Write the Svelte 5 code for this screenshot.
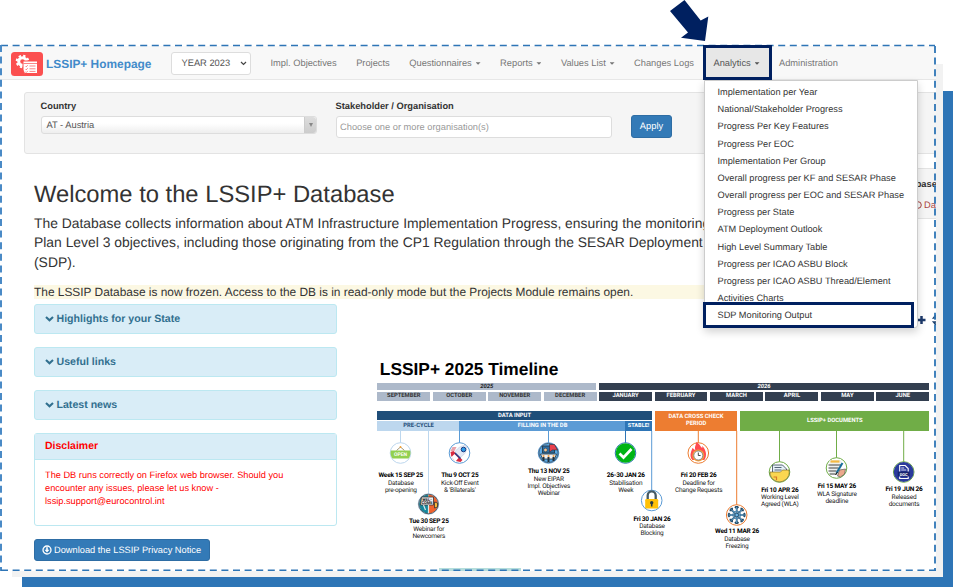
<script lang="ts">
  type Link = { label: string; caret?: boolean; active?: boolean };

  const links: Link[] = [
    { label: 'Impl. Objectives' },
    { label: 'Projects' },
    { label: 'Questionnaires', caret: true },
    { label: 'Reports', caret: true },
    { label: 'Values List', caret: true },
    { label: 'Changes Logs' },
    { label: 'Analytics', caret: true, active: true },
    { label: 'Administration' }
  ];

  const analytics = [
    'Implementation per Year',
    'National/Stakeholder Progress',
    'Progress Per Key Features',
    'Progress Per EOC',
    'Implementation Per Group',
    'Overall progress per KF and SESAR Phase',
    'Overall progress per EOC and SESAR Phase',
    'Progress per State',
    'ATM Deployment Outlook',
    'High Level Summary Table',
    'Progress per ICAO ASBU Block',
    'Progress per ICAO ASBU Thread/Element',
    'Activities Charts',
    'SDP Monitoring Output'
  ];

  const panels = ['Highlights for your State', 'Useful links', 'Latest news'];

  const months = [
    'SEPTEMBER', 'OCTOBER', 'NOVEMBER', 'DECEMBER', 'JANUARY',
    'FEBRUARY', 'MARCH', 'APRIL', 'MAY', 'JUNE'
  ];

  // x / y are the icon centre on the timeline canvas, label is the top of the caption
  const milestones = [
    { icon: 'open', x: 23.5, y: 70, from: 48, label: 89.5, color: '#bdd7ee', date: 'Week 15 SEP 25', lines: ['Database', 'pre-opening'] },
    { icon: 'welcome', x: 51.5, y: 121, from: 48, label: 135.5, color: '#bdd7ee', date: 'Tue 30 SEP 25', lines: ['Webinar for', 'Newcomers'] },
    { icon: 'rocket', x: 82.5, y: 70, from: 38, label: 89.5, color: '#5b9bd5', date: 'Thu 9 OCT 25', lines: ['Kick-Off Event', "& 'Bilaterals'"] },
    { icon: 'meeting', x: 171.5, y: 70, from: 48, label: 85.5, color: '#5b9bd5', date: 'Thu 13 NOV 25', lines: ['New EIPAR', 'Impl. Objectives', 'Webinar'] },
    { icon: 'check', x: 248.5, y: 70, from: 48, label: 89.5, color: '#2e75b6', date: '26-30 JAN 26', lines: ['Stabilisation', 'Week'] },
    { icon: 'lock', x: 274.7, y: 117.5, from: 48, label: 133, color: '#5b9bd5', date: 'Fri 30 JAN 26', lines: ['Database', 'Blocking'] },
    { icon: 'fire', x: 321.3, y: 70, from: 48, label: 89.5, color: '#ed7d31', date: 'Fri 20 FEB 26', lines: ['Deadline for', 'Change Requests'] },
    { icon: 'snow', x: 359.7, y: 132, from: 48, label: 145.5, color: '#ed7d31', date: 'Wed 11 MAR 26', lines: ['Database', 'Freezing'] },
    { icon: 'folder', x: 402.5, y: 89, from: 48, label: 104, color: '#70ad47', date: 'Fri 10 APR 26', lines: ['Working Level', 'Agreed (WLA)'] },
    { icon: 'sign', x: 459.5, y: 85, from: 48, label: 100.5, color: '#70ad47', date: 'Fri 15 MAY 26', lines: ['WLA Signature', 'deadline'] },
    { icon: 'doc', x: 526.7, y: 89, from: 48, label: 103.5, color: '#70ad47', date: 'Fri 19 JUN 26', lines: ['Released', 'documents'] }
  ];
</script>

<div class="slide">
  <div class="backdrop blue"></div>
  <div class="backdrop grey"></div>

  <div class="shot">
    <nav class="navbar">
      <svg class="logo" width="32" height="24" viewBox="0 0 32 24">
        <rect width="32" height="24" rx="3.5" fill="#fb4f4f" />
        <circle cx="11.5" cy="9.5" r="3.8" fill="none" stroke="#fff" stroke-width="3" />
        <circle cx="11.5" cy="9.5" r="5.8" fill="none" stroke="#fff" stroke-width="2" stroke-dasharray="2.4 2.15" />
        <path d="M12 9h14.500V21.500H13.500L12 18z" fill="#fff" stroke="#fb4f4f" stroke-width="1" />
        <path d="M12.500 11.500H26" stroke="#fb4f4f" stroke-width=".7" />
        <path d="M14.500 14l.8.8 1.400-1.600M14.500 17l.8.8 1.400-1.600M14.500 20l.8.5 1.400-1.400M18.500 14h6M18.500 16.800h6M18.500 19.400h6" fill="none" stroke="#fb4f4f" stroke-width=".7" />
      </svg>
      <span class="brand">LSSIP+ Homepage</span>
      <div class="year">
        YEAR 2023
        <svg width="7" height="5" viewBox="0 0 7 5"><path d="M1 1l2.500 2.500L6 1" fill="none" stroke="#444" stroke-width="1.200" /></svg>
      </div>
      <ul class="links">
        {#each links as link}
          <li class:active={link.active}>
            {link.label}{#if link.caret}<i class="caret"></i>{/if}
          </li>
        {/each}
      </ul>
    </nav>

    <section class="well">
      <div class="field country">
        <span class="lbl">Country</span>
        <div class="select">
          <span>AT - Austria</span>
          <b><i class="tri"></i></b>
        </div>
      </div>
      <div class="field stakeholder">
        <span class="lbl">Stakeholder / Organisation</span>
        <div class="input">Choose one or more organisation(s)</div>
      </div>
      <div class="apply">Apply</div>
    </section>

    <section class="intro">
      <h1>Welcome to the LSSIP+ Database</h1>
      <p>
        The Database collects information about ATM Infrastructure Implementation Progress, ensuring the monitoring<br />
        Plan Level 3 objectives, including those originating from the CP1 Regulation through the SESAR Deployment<br />
        (SDP).
      </p>
      <div class="frozen">The LSSIP Database is now frozen. Access to the DB is in read-only mode but the Projects Module remains open.</div>
    </section>

    <div class="columns">
      <aside>
        {#each panels as panel}
          <div class="panel">
            <svg width="9" height="6" viewBox="0 0 9 6"><path d="M1 1l3.500 3.300L8 1" fill="none" stroke="#31708f" stroke-width="2.100" /></svg>
            {panel}
          </div>
        {/each}
        <div class="disclaimer">
          <div class="disc-head">Disclaimer</div>
          <div class="disc-body">
            The DB runs correctly on Firefox web browser. Should you<br />
            encounter any issues, please let us know -<br />
            lssip.support@eurocontrol.int
          </div>
        </div>
        <div class="download">
          <svg width="10" height="10" viewBox="0 0 10 10">
            <circle cx="5" cy="5" r="4" fill="none" stroke="#fff" stroke-width="1.300" />
            <path d="M4.200 2.300h1.600v2.400h1.700L5 7.600 2.500 4.700h1.700z" fill="#fff" />
          </svg>
          Download the LSSIP Privacy Notice
        </div>
      </aside>

      <main>
        <h2>LSSIP+ 2025 Timeline</h2>
        <div class="timeline">
          <div class="years">
            <span class="y25">2025</span>
            <span class="y26">2026</span>
          </div>
          <div class="months">
            {#each months as month, i}
              <span class:dark={i > 3}>{month}</span>
            {/each}
          </div>
          <div class="phases">
            <div class="input-phase">
              <div class="bar navy">DATA INPUT</div>
              <div class="sub">
                <span class="pre">PRE-CYCLE</span>
                <span class="fill">FILLING IN THE DB</span>
                <span class="stable">STABLE!</span>
              </div>
            </div>
            <div class="bar orange">DATA CROSS CHECK<br />PERIOD</div>
            <div class="bar green">LSSIP+ DOCUMENTS</div>
          </div>

          <svg class="marks" width="554" height="160" viewBox="0 0 554 160">
            {#each milestones as m}
              <path d="M{m.x} {m.from}V{m.y - 10}" stroke={m.color} stroke-width="1" />
              <g transform="translate({m.x} {m.y})">
                <circle r="10.300" fill="#fff" stroke={m.color} stroke-width="1" />
                {#if m.icon === 'open'}
                  <path d="M-4-2.500L0-6l4 3.500" fill="none" stroke="#8a7a50" stroke-width=".8" />
                  <circle cy="-6" r=".9" fill="#f4a030" />
                  <path d="M-9.700-2.500H9.700A10 10 0 0 1 8 5.500H-8A10 10 0 0 1-9.700-2.500z" fill="#92d050" />
                  <text y="3.300" font-size="5" text-anchor="middle" fill="#fff">OPEN</text>
                {:else if m.icon === 'welcome'}
                  <path d="M0-9.500A9.500 9.500 0 0 0 0 9.500z" fill="#16879c" />
                  <path d="M0-9.500A9.500 9.500 0 0 1 0 9.500z" fill="#f0622d" />
                  <circle r="9.800" fill="none" stroke="#33414c" stroke-width=".8" />
                  <path d="M-7-7H5V1H-8z" fill="#eee" stroke="#333" stroke-width=".8" />
                  <text x="-1.500" y="-3.200" font-size="4" text-anchor="middle" fill="#222">WEL-</text>
                  <text x="-1.500" y=".4" font-size="4" text-anchor="middle" fill="#222">COME</text>
                  <path d="M-5 1L-3 6M0 1v8" stroke="#dfe8ea" stroke-width="1.200" />
                  <path d="M6-2l3 1v4l-3 1z" fill="#f6b93b" stroke="#333" stroke-width=".8" />
                {:else if m.icon === 'rocket'}
                  <path d="M7-7.500C1-8-3-4-5 0L-1 5C4 3 8-1 7-7.500z" fill="#e3e9f5" stroke="#b6c3db" stroke-width=".5" />
                  <path d="M-5-2l-4 0 2-4 4 0z" fill="#e9a3ab" />
                  <path d="M-9-1L-6-2 3 7 1 9A9.800 9.800 0 0 1-9-1z" fill="#d92b40" />
                  <path d="M-8 4L-5 1-1 5-4 8.500z" fill="#fff" />
                  <path d="M-4.500 0L1 5.500" stroke="#27418c" stroke-width="1.500" />
                  <circle cx="4" cy="-3.500" r="2.300" fill="#2c9be5" stroke="#1d3c83" stroke-width="1" />
                {:else if m.icon === 'meeting'}
                  <circle r="9.600" fill="#5baae6" stroke="#25445e" stroke-width=".8" />
                  <path d="M-6-7H6V0H-6z" fill="#2d6fa5" stroke="#24323e" stroke-width=".8" />
                  <path d="M1-8.500h5L9-3H4L1-1z" fill="#e9404d" stroke="#24323e" stroke-width=".6" />
                  <circle cx="-3" cy="-3" r="1.800" fill="#f3c595" stroke="#24323e" stroke-width=".5" />
                  <path d="M-8 1H8L6 6H-6z" fill="#eef1f4" stroke="#24323e" stroke-width=".8" />
                  <path d="M-5 8V4M0 9V4M5 8V4" stroke="#24323e" stroke-width="2" />
                  <path d="M-5 3h.1M0 3h.1M5 3h.1" stroke="#f3a14a" stroke-width="2" stroke-linecap="round" />
                {:else if m.icon === 'check'}
                  <circle r="9.800" fill="#00b414" />
                  <path d="M-6 .5L-2 4.500 6-4" fill="none" stroke="#fff" stroke-width="2.700" />
                {:else if m.icon === 'lock'}
                  <path d="M-4-1v-4a4 4.200 0 0 1 8 0v4" fill="none" stroke="#455a64" stroke-width="2.300" />
                  <rect x="-6.500" y="-1.500" width="13" height="9.500" rx="1.300" fill="#ffc107" />
                  <circle cy="2.300" r="1.700" fill="#263b46" />
                  <path d="M0 2v4" stroke="#263b46" stroke-width="1.500" />
                {:else if m.icon === 'fire'}
                  <path d="M-6 7C-10 2-6-3-6-5c2 1 2 2 3 2-1-4 1-5 1-8 4 2 4 5 6 6V-7c4 4 5 10 2 14z" fill="#ff4b50" />
                  <circle cy="2.500" r="6" fill="#f7a03c" />
                  <circle cy="2.500" r="4.500" fill="#fff" stroke="#6b7d8d" stroke-width=".8" />
                  <path d="M0-.5v3h2.300" fill="none" stroke="#333" stroke-width=".9" />
                {:else if m.icon === 'snow'}
                  {#each [0, 45, 90, 135] as angle}
                    <path transform="rotate({angle})" d="M0-9V9M-1.800-8.300L0-6.500 1.800-8.300M-1.800 8.300L0 6.500 1.800 8.300" fill="none" stroke="#234a66" stroke-width="1.700" />
                    <path transform="rotate({angle})" d="M0-8V8" stroke="#70b9e8" stroke-width=".8" />
                  {/each}
                  <circle r="4" fill="none" stroke="#3f7ba3" stroke-width=".9" />
                  <circle r="1.800" fill="#70b9e8" stroke="#234a66" stroke-width=".8" />
                {:else if m.icon === 'folder'}
                  <path d="M-7-7H3L7-3V2H-7z" fill="#e5f1f7" stroke="#345" stroke-width=".8" />
                  <path d="M-5-4.500h7M-5-2h7" stroke="#456" stroke-width=".9" />
                  <path d="M-9.500 0H1L3-2h6.500A9.700 9.700 0 0 1-5 8.300 9.700 9.700 0 0 1-9.500 0z" fill="#fbd750" stroke="#6d5b23" stroke-width=".6" />
                  <path d="M-6 5h3v3" stroke="#d87926" stroke-width="1.200" fill="none" />
                {:else if m.icon === 'sign'}
                  <path d="M-7-8H5V7H-7z" fill="#edf0ee" />
                  <path d="M-6-6.500h9" stroke="#f4b942" stroke-width="2.200" />
                  <path d="M-8-3H5M-8 0H2M-8 3h8M-7 6h7" stroke="#444" stroke-width="1.200" />
                  <path d="M1 8L3 2l6-1-1 5-4 3z" fill="#eca98c" stroke="#444" stroke-width=".6" />
                  <path d="M0 5L6-5" stroke="#176e9b" stroke-width="2" />
                  <path d="M-1 7L1 4" stroke="#222" stroke-width="1" />
                {:else}
                  <circle r="10" fill="#2a3b9c" />
                  <path d="M-4-6.500H1.500L4.500-3.500V6.500H-4z" fill="none" stroke="#fff" stroke-width="1.100" />
                  <path d="M-2.500-4h3M-2.500-2h5" stroke="#fff" stroke-width=".8" />
                  <path d="M-6-.5H6V4.500H-6z" fill="#17256f" />
                  <text y="3.600" font-size="4" text-anchor="middle" fill="#fff">DOC</text>
                {/if}
              </g>
            {/each}
          </svg>

          {#each milestones as m}
            <div class="caption" style="left:{m.x}px;top:{m.label}px">
              <b>{m.date}</b>
              {#each m.lines as line}<span>{line}</span>{/each}
            </div>
          {/each}
        </div>
      </main>
    </div>

    <div class="teal-edge"></div>

    <div class="side-box">
      <b>Database</b>
      <span>
        <svg width="8" height="8" viewBox="0 0 8 8"><circle cx="4" cy="4" r="3.300" fill="none" stroke="#a94442" /></svg>
        Da
      </span>
    </div>

    <svg class="tools" width="24" height="18" viewBox="0 0 24 18">
      <path d="M7.500 5v8M3.500 9h8" stroke="#1d3a6b" stroke-width="2.500" />
      <path d="M22 4l-2.500 3H22M22 14l-2.500-3H22" fill="none" stroke="#1d4270" stroke-width="1.500" />
    </svg>

    <ul class="menu">
      {#each analytics as item}
        <li>{item}</li>
      {/each}
    </ul>
  </div>

  <!-- dashed frame, callout boxes and arrow sit over the page -->
  <svg class="overlay" width="953" height="587" viewBox="0 0 953 587">
    <path d="M1 45.600H935" stroke="#2e75b6" stroke-width="1.500" stroke-dasharray="7 4.600" />
    <path d="M1 45V571" stroke="#4a8ac6" stroke-width="2" stroke-dasharray="7 4.600" />
    <path d="M935 46V571" stroke="#2e75b6" stroke-width="1.800" stroke-dasharray="7 4.600" />
    <path d="M1 570.300H936" stroke="#2e75b6" stroke-width="1.500" stroke-dasharray="7 4.600" />
    <path d="M670 11L684.500 0 700.700 20.500 708.300 16.500 705 41 681 37.700 688 32.500z" fill="#002060" />
    <rect x="704.500" y="46.500" width="66" height="32" fill="none" stroke="#002060" stroke-width="3" />
    <rect x="704.500" y="303.500" width="208" height="23" fill="none" stroke="#002060" stroke-width="3" />
  </svg>
</div>

<style>
  :global(body) {
    margin: 0;
    background: #fff;
  }

  .slide {
    position: relative;
    width: 953px;
    height: 587px;
    overflow: hidden;
    font-family: 'Liberation Sans', Arial, sans-serif;
    font-size: 9.3px;
    color: #333;
    text-rendering: geometricPrecision;
    white-space: nowrap;
  }

  .slide * {
    box-sizing: border-box;
  }

  .backdrop {
    position: absolute;
    right: 0;
    bottom: 0;
  }

  .backdrop.blue {
    left: 22px;
    top: 91px;
    background: #2e75b6;
  }

  .backdrop.grey {
    left: 12px;
    top: 64px;
    right: 10px;
    bottom: 10px;
    background: #f2f2f2;
  }

  .shot {
    position: absolute;
    left: 0;
    top: 46px;
    width: 936px;
    height: 525px;
    overflow: hidden;
    background: #fff;
  }

  ul {
    list-style: none;
    margin: 0;
    padding: 0;
  }

  /* ── Navbar ── */
  .navbar {
    display: flex;
    align-items: center;
    height: 34px;
    padding-left: 10.5px;
    background: #f8f8f8;
    border-bottom: 1px solid #e7e7e7;
    color: #777;
  }

  .logo {
    margin-top: 2px;
  }

  .brand {
    width: 124.5px;
    margin: 3px 0 0 3.5px;
    font-size: 11.9px;
    font-weight: 700;
    color: #428bca;
  }

  .year {
    display: flex;
    align-items: center;
    justify-content: space-between;
    width: 80px;
    height: 23px;
    padding: 0 3px 0 10px;
    margin-top: 1px;
    border: 1px solid #ddd;
    border-radius: 3px;
    background: #fff;
    color: #555;
  }

  .links {
    display: flex;
    gap: 19.5px;
    height: 33px;
    margin-left: 20px;
    line-height: 34px;
  }

  .links li.active {
    margin: 0 -10.75px 0 -9.75px;
    padding: 0 10.75px 0 9.75px;
    background: #e7e7e7;
    color: #555;
  }

  .caret {
    display: inline-block;
    width: 5px;
    height: 2.5px;
    margin-left: 3.8px;
    vertical-align: middle;
    background: currentColor;
    clip-path: polygon(0 0, 100% 0, 50% 100%);
  }

  /* ── Filters ── */
  .well {
    display: flex;
    height: 62px;
    margin: 12px -10px 0 24px;
    padding: 7px 0 0 15.5px;
    background: #f5f5f5;
    border: 1px solid #e3e3e3;
    border-radius: 3px;
  }

  .lbl {
    display: block;
    height: 16px;
    line-height: 12px;
    font-weight: 700;
  }

  .country {
    width: 295px;
  }

  .stakeholder {
    width: 295.5px;
  }

  .select {
    display: flex;
    justify-content: space-between;
    width: 276.5px;
    height: 18px;
    line-height: 17px;
    padding-left: 5px;
    border: 1px solid #ddd;
    border-radius: 3px;
    background: linear-gradient(#fff 40%, #eee);
    color: #555;
  }

  .select b {
    display: flex;
    align-items: center;
    justify-content: center;
    width: 12px;
    border-left: 1px solid #ccc;
    border-radius: 0 3px 3px 0;
    background: linear-gradient(#ddd, #ccc);
  }

  .tri {
    border-top: 4px solid #888;
    border-left: 2px solid transparent;
    border-right: 2px solid transparent;
  }

  .input {
    width: 276.5px;
    height: 22px;
    padding-left: 3.5px;
    line-height: 21px;
    border: 1px solid #ddd;
    border-radius: 3px;
    background: #fff;
    color: #999;
  }

  .apply {
    width: 41px;
    height: 23px;
    margin-top: 15px;
    line-height: 21.5px;
    text-align: center;
    background: #337ab7;
    border: 1px solid #2e6da4;
    border-radius: 3px;
    color: #fff;
  }

  /* ── Intro ── */
  .intro {
    padding: 26px 0 0 34px;
  }

  h1 {
    margin: 0;
    font-size: 23.75px;
    line-height: 30px;
    font-weight: 400;
  }

  p {
    margin: 4px 0 0;
    font-size: 13.88px;
    line-height: 19.3px;
  }

  .frozen {
    width: 710px;
    margin-top: 13px;
    font-size: 11.9px;
    line-height: 14px;
    background: #fcf8e3;
  }

  /* ── Panels ── */
  .columns {
    display: flex;
    padding: 5px 0 0 34px;
  }

  aside {
    width: 303px;
  }

  .panel {
    display: flex;
    align-items: center;
    gap: 3px;
    height: 30px;
    margin-bottom: 12.9px;
    padding: 1px 0 0 9.5px;
    border: 1px solid #bce8f1;
    border-radius: 3px;
    background: #d9edf7;
    color: #31708f;
    font-size: 10.6px;
    font-weight: 700;
  }

  .disclaimer {
    height: 93px;
    border: 1px solid #bce8f1;
    border-radius: 3px;
    color: #f00;
  }

  .disc-head {
    height: 26px;
    padding-left: 10px;
    line-height: 25px;
    border-bottom: 1px solid #bce8f1;
    background: #d9edf7;
    font-size: 10.5px;
    font-weight: 700;
  }

  .disc-body {
    padding: 9.5px 0 0 10px;
    font-size: 9.22px;
    line-height: 13.2px;
  }

  .download {
    display: flex;
    align-items: center;
    gap: 2px;
    width: 176px;
    height: 22px;
    margin-top: 13px;
    padding-left: 7px;
    background: #337ab7;
    border: 1px solid #2e6da4;
    border-radius: 3px;
    color: #fff;
    font-size: 9.28px;
  }

  /* ── Timeline ── */
  main {
    width: 552px;
    margin-left: 40.3px;
    padding-top: 54px;
  }

  h2 {
    margin: 0 0 0 2.5px;
    height: 25px;
    line-height: 22px;
    font-size: 17.35px;
    color: #000;
  }

  .timeline {
    position: relative;
    font-family: Roboto, sans-serif;
    font-size: 5.85px;
    font-weight: 700;
    text-align: center;
    color: #fff;
  }

  .years {
    display: flex;
    gap: 2.5px;
    height: 7.5px;
    line-height: 8px;
    font-style: italic;
  }

  .y25 {
    width: 219px;
    background: #adb9ca;
    color: #222;
  }

  .y26 {
    flex: 1;
    background: #333f50;
  }

  .months {
    display: grid;
    grid-template-columns: repeat(10, 1fr);
    gap: 2.5px;
    margin-top: 1.8px;
    line-height: 9.2px;
  }

  .months span {
    height: 8.7px;
    background: #adb9ca;
    color: #333;
  }

  .months span.dark {
    background: #333f50;
    color: #fff;
  }

  .phases {
    display: flex;
    gap: 3px;
    height: 20.5px;
    margin-top: 9.8px;
  }

  .input-phase {
    width: 274.5px;
  }

  .bar.navy {
    height: 9.5px;
    line-height: 10px;
    background: #1f4e79;
  }

  .sub {
    display: flex;
    height: 10px;
    margin-top: 1px;
    line-height: 10px;
  }

  .pre {
    width: 82.5px;
    background: #bdd7ee;
    color: #1f4e79;
  }

  .fill {
    flex: 1;
    background: #5b9bd5;
  }

  .stable {
    width: 26.5px;
    background: #2e75b6;
    font-size: 5.6px;
  }

  .orange {
    width: 82.5px;
    padding-top: 3px;
    line-height: 7.3px;
    background: #ed7d31;
  }

  .green {
    flex: 1;
    line-height: 20.5px;
    background: #70ad47;
  }

  .marks {
    position: absolute;
    left: 0;
    top: 0;
    font-weight: 700;
  }

  .caption {
    position: absolute;
    transform: translateX(-50%);
    font-size: 6.5px;
    letter-spacing: -0.22px;
    line-height: 7.3px;
    font-weight: 400;
    color: #222;
  }

  .caption b {
    color: #000;
  }

  .caption b,
  .caption span {
    display: block;
  }

  .teal-edge {
    position: absolute;
    left: 439px;
    top: 521.5px;
    width: 82px;
    height: 3px;
    background: #b5dddc;
  }

  .side-box {
    position: absolute;
    left: 860px;
    top: 122px;
    width: 90px;
    height: 51px;
    background: #f5f5f5;
    border: 1px solid #e3e3e3;
  }

  .side-box b {
    display: block;
    margin: 10px 0 0 34.5px;
  }

  .side-box span {
    display: flex;
    align-items: center;
    gap: 2px;
    margin: 11px 0 0 53px;
    color: #a94442;
  }

  .tools {
    position: absolute;
    left: 914px;
    top: 264.5px;
  }

  /* ── Analytics dropdown ── */
  .menu {
    position: absolute;
    left: 704px;
    top: 34px;
    width: 214px;
    height: 248px;
    padding: 3px 0 0 12.5px;
    background: #fff;
    border: 1px solid #ccc;
    border-radius: 0 0 3px 3px;
    box-shadow: 0 4px 8px rgba(0, 0, 0, 0.175);
    font-size: 9.23px;
    line-height: 17.17px;
  }

  .overlay {
    position: absolute;
    left: 0;
    top: 0;
  }
</style>
